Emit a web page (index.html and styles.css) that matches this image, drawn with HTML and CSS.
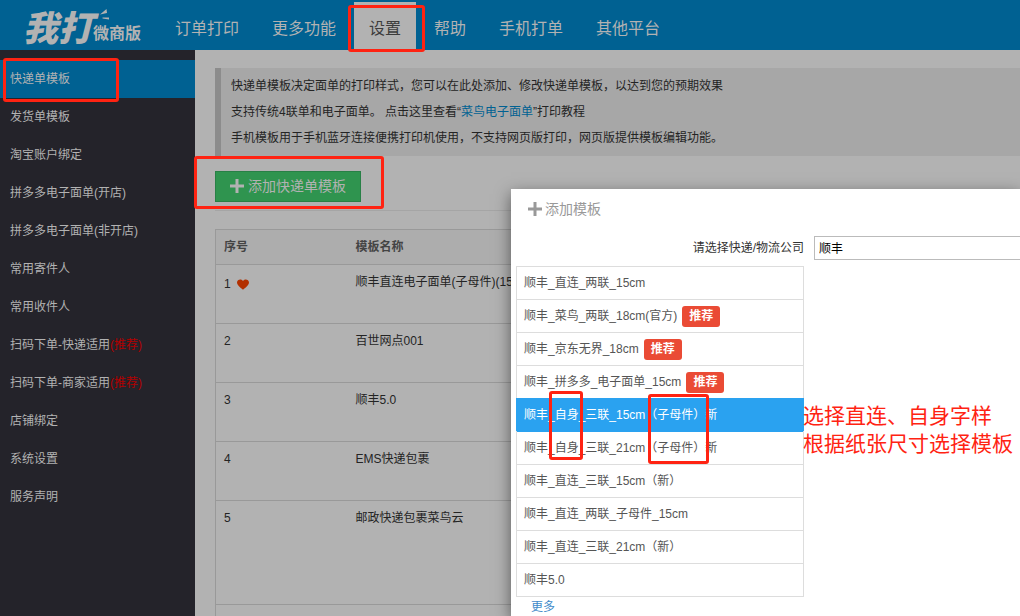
FILE: index.html
```html
<!DOCTYPE html>
<html lang="zh-CN">
<head>
<meta charset="utf-8">
<title>快递单模板</title>
<link rel="stylesheet" href="styles.css">
</head>
<body>
<header class="topbar">
  <a class="logo" href="#">
    <span class="logo-main">我打</span>
    <span class="logo-sub">微商版</span>
    <svg class="logo-rays" viewBox="0 0 10 12" aria-hidden="true"><path d="M0 5.5 6.5 0 7 4zM2.5 8.5 9 8.5V10.5L2.5 9.5z"/></svg>
  </a>
  <nav class="topnav">
    <a href="#">订单打印</a>
    <a href="#">更多功能</a>
    <a class="active" href="#">设置</a>
    <a href="#">帮助</a>
    <a href="#">手机打单</a>
    <a href="#">其他平台</a>
  </nav>
</header>

<div class="layout">
  <nav class="sidebar">
    <a class="active" href="#">快递单模板</a>
    <a href="#">发货单模板</a>
    <a href="#">淘宝账户绑定</a>
    <a href="#">拼多多电子面单(开店)</a>
    <a href="#">拼多多电子面单(非开店)</a>
    <a href="#">常用寄件人</a>
    <a href="#">常用收件人</a>
    <a href="#">扫码下单-快递适用<span class="hot">(推荐)</span></a>
    <a href="#">扫码下单-商家适用<span class="hot">(推荐)</span></a>
    <a href="#">店铺绑定</a>
    <a href="#">系统设置</a>
    <a href="#">服务声明</a>
  </nav>

  <main class="content">
    <div class="notice">
      <p>快递单模板决定面单的打印样式，您可以在此处添加、修改快递单模板，以达到您的预期效果</p>
      <p>支持传统4联单和电子面单。 点击这里查看“<a href="#">菜鸟电子面单</a>”打印教程</p>
      <p>手机模板用于手机蓝牙连接便携打印机使用，不支持网页版打印，网页版提供模板编辑功能。</p>
    </div>
    <div class="toolbar">
      <button class="add-button" type="button">
        <svg class="plus" viewBox="0 0 14 14" aria-hidden="true"><path d="M5.500 0h3v5.500H14v3H8.500V14h-3V8.500H0v-3h5.500z"/></svg>
        <span>添加快递单模板</span>
      </button>
    </div>
    <table class="templates">
      <thead>
        <tr><th class="col-index">序号</th><th>模板名称</th></tr>
      </thead>
      <tbody>
        <tr><td class="starred">1 <svg class="heart" viewBox="0 0 12 11" aria-hidden="true"><path d="M6 2C5-.3 0-.2 0 3.600 0 6.500 4 9 6 10.800 8 9 12 6.500 12 3.600 12-.2 7-.3 6 2z"/></svg></td><td>顺丰直连电子面单(子母件)(15cm)</td></tr>
        <tr><td>2</td><td>百世网点001</td></tr>
        <tr><td>3</td><td>顺丰5.0</td></tr>
        <tr><td>4</td><td>EMS快递包裹</td></tr>
        <tr class="tall"><td>5</td><td>邮政快递包裹菜鸟云</td></tr>
        <tr><td></td><td></td></tr>
      </tbody>
    </table>
  </main>
</div>

<section class="dialog" role="dialog" aria-labelledby="dialog-title">
  <h2 class="dialog-title" id="dialog-title">
    <svg class="plus" viewBox="0 0 14 14" aria-hidden="true"><path d="M5.500 0h3v5.500H14v3H8.500V14h-3V8.500H0v-3h5.500z"/></svg>
    <span>添加模板</span>
  </h2>
  <div class="field">
    <label for="company">请选择快递/物流公司</label>
    <input id="company" type="text" value="顺丰">
  </div>
  <ul class="options">
    <li><button type="button">顺丰_直连_两联_15cm</button></li>
    <li><button type="button">顺丰_菜鸟_两联_18cm(官方)<span class="badge">推荐</span></button></li>
    <li><button type="button">顺丰_京东无界_18cm<span class="badge">推荐</span></button></li>
    <li><button type="button">顺丰_拼多多_电子面单_15cm<span class="badge">推荐</span></button></li>
    <li class="selected"><button type="button">顺丰_自身_三联_15cm（子母件）新</button></li>
    <li><button type="button">顺丰_自身_三联_21cm（子母件）新</button></li>
    <li><button type="button">顺丰_直连_三联_15cm（新）</button></li>
    <li><button type="button">顺丰_直连_两联_子母件_15cm</button></li>
    <li><button type="button">顺丰_直连_三联_21cm（新）</button></li>
    <li><button type="button">顺丰5.0</button></li>
  </ul>
  <a class="more" href="#">更多</a>
</section>

<div class="mark mark-menu"></div>
<div class="mark mark-tab"></div>
<div class="mark mark-add"></div>
<div class="mark mark-self"></div>
<div class="mark mark-parts"></div>
<p class="remark">选择直连、自身字样<br>根据纸张尺寸选择模板</p>
</body>
</html>
```
FILE: styles.css
```css
* { box-sizing: border-box; }

body {
  position: relative;
  display: flex;
  flex-direction: column;
  height: 100vh;
  margin: 0;
  overflow: hidden;
  background: #b2b2b2;
  color: #242424;
  font: 12px/20px "Liberation Sans", "Noto Sans CJK SC", sans-serif;
}

a { color: inherit; text-decoration: none; }
p, h2, ul { margin: 0; padding: 0; }
button, input { font: inherit; color: inherit; }

/* Top bar */
.topbar {
  display: flex;
  flex: none;
  height: 50px;
  background: #006192;
  color: #b2b2b2;
}

.logo {
  position: relative;
  display: flex;
  align-items: flex-end;
  width: 160px;
  padding: 0 0 8px 23px;
  font-family: "Noto Sans CJK SC", sans-serif;
  font-weight: 900;
  white-space: nowrap;
}

.logo-main {
  width: 70px;
  font-size: 35px;
  font-style: italic;
  line-height: 32px;
}

.logo-sub { font-size: 16px; font-weight: 700; line-height: 20px; }

.logo-rays {
  position: absolute;
  top: 9px;
  left: 100px;
  width: 10px;
  height: 12px;
  fill: currentColor;
}

.topnav { display: flex; gap: 3px; padding-top: 2px; }

.topnav a {
  padding: 6px 15px 0;
  font-size: 16px;
  line-height: 42px;
  white-space: nowrap;
}

.topnav .active { background: #b2b2b2; color: #3c3c3c; }

/* Page body */
.layout { display: flex; flex: 1; min-height: 0; }

.sidebar {
  flex: none;
  width: 195px;
  padding-top: 10px;
  background: #24232a;
  color: #b2b2b2;
}

.sidebar a { display: block; padding-left: 10px; line-height: 38px; }
.sidebar .active { background: #006192; }
.hot { color: #b20000; }

.content { flex: 1; min-width: 0; padding: 18px 0 0 20px; overflow: hidden; }

.notice {
  padding: 5px 10px;
  border-left: 6px solid #8c8c8c;
  background: #a7a7a7;
  line-height: 26px;
}

.notice a { color: #006192; }

.toolbar {
  padding: 15px 0 8px;
  border-bottom: 1px solid #a5a5a5;
}

.add-button {
  display: flex;
  align-items: center;
  gap: 4px;
  height: 31px;
  padding: 0 14px 2px;
  border: 1px solid #288046;
  background: #2f944f;
  color: #b2b2b2;
  font-size: 14px;
}

.plus { width: 14px; height: 14px; fill: currentColor; }

.templates {
  width: 100%;
  margin-top: 18px;
  border-collapse: collapse;
  border: 1px solid #999;
  table-layout: fixed;
}

.templates th,
.templates td {
  height: 59px;
  padding: 7px 8px;
  border-bottom: 1px solid #999;
  text-align: left;
  vertical-align: top;
}

.templates th { height: 35px; background: #adadad; color: #444; }
.templates .col-index { width: 132px; }
.templates .tall td { height: 104px; }
.templates .starred { padding-top: 9px; }
.heart { width: 12px; height: 11px; margin-left: 3px; vertical-align: -2px; fill: #b23000; }

/* Dialog */
.dialog {
  position: absolute;
  top: 189px;
  right: 0;
  bottom: 0;
  left: 511px;
  padding: 10px 0 0 5px;
  background: #fff;
  box-shadow: 0 5px 15px rgba(0, 0, 0, .5);
  color: #555;
}

.dialog-title {
  display: flex;
  align-items: center;
  gap: 3px;
  padding-left: 12px;
  color: #999;
  font-size: 14px;
  font-weight: 400;
}

.field { display: flex; align-items: center; margin-top: 17px; color: #333; }
.field label { width: 288px; text-align: right; }

.field input {
  flex: 1;
  min-width: 0;
  height: 24px;
  margin-left: 10px;
  padding: 0 4px 2px;
  border: 1px solid #bbb;
  border-right: 0;
  background: #fff;
  color: #000;
}

.options {
  width: 288px;
  margin-top: 6px;
  border: 1px solid #ddd;
  list-style: none;
}

.options li + li { border-top: 1px solid #ddd; }

.options button {
  display: flex;
  align-items: center;
  gap: 5px;
  width: 100%;
  height: 32px;
  padding: 0 7px;
  border: 0;
  background: none;
  text-align: left;
  white-space: nowrap;
}

.options .selected { margin: 0 -1px; border-color: #2aa2f0; background: #2aa2f0; color: #fff; }
.options .selected button { padding: 0 8px; }
.options .selected + li { border-color: #ddd; border-top-color: #2aa2f0; }

.badge {
  padding: 0 7px;
  border-radius: 3px;
  background: #ea4b35;
  color: #fff;
  font-weight: 700;
  line-height: 21px;
}

.more { display: inline-block; padding: 1px 0 0 15px; color: #428bca; line-height: 18px; }

/* Red highlight frames */
.mark {
  position: absolute;
  border: 3px solid #ff2312;
  border-radius: 3px;
  pointer-events: none;
}

.mark-menu { top: 58px; left: 3px; width: 116px; height: 44px; }
.mark-tab { top: 5px; left: 348px; width: 77px; height: 47px; }
.mark-add { top: 156px; left: 194px; width: 190px; height: 53px; }
.mark-self { top: 391px; left: 549px; width: 34px; height: 69px; }
.mark-parts { top: 394px; left: 648px; width: 61px; height: 70px; }

.remark {
  position: absolute;
  top: 402px;
  left: 803px;
  color: #ff2312;
  font-size: 21px;
  line-height: 28px;
  white-space: nowrap;
}
```
